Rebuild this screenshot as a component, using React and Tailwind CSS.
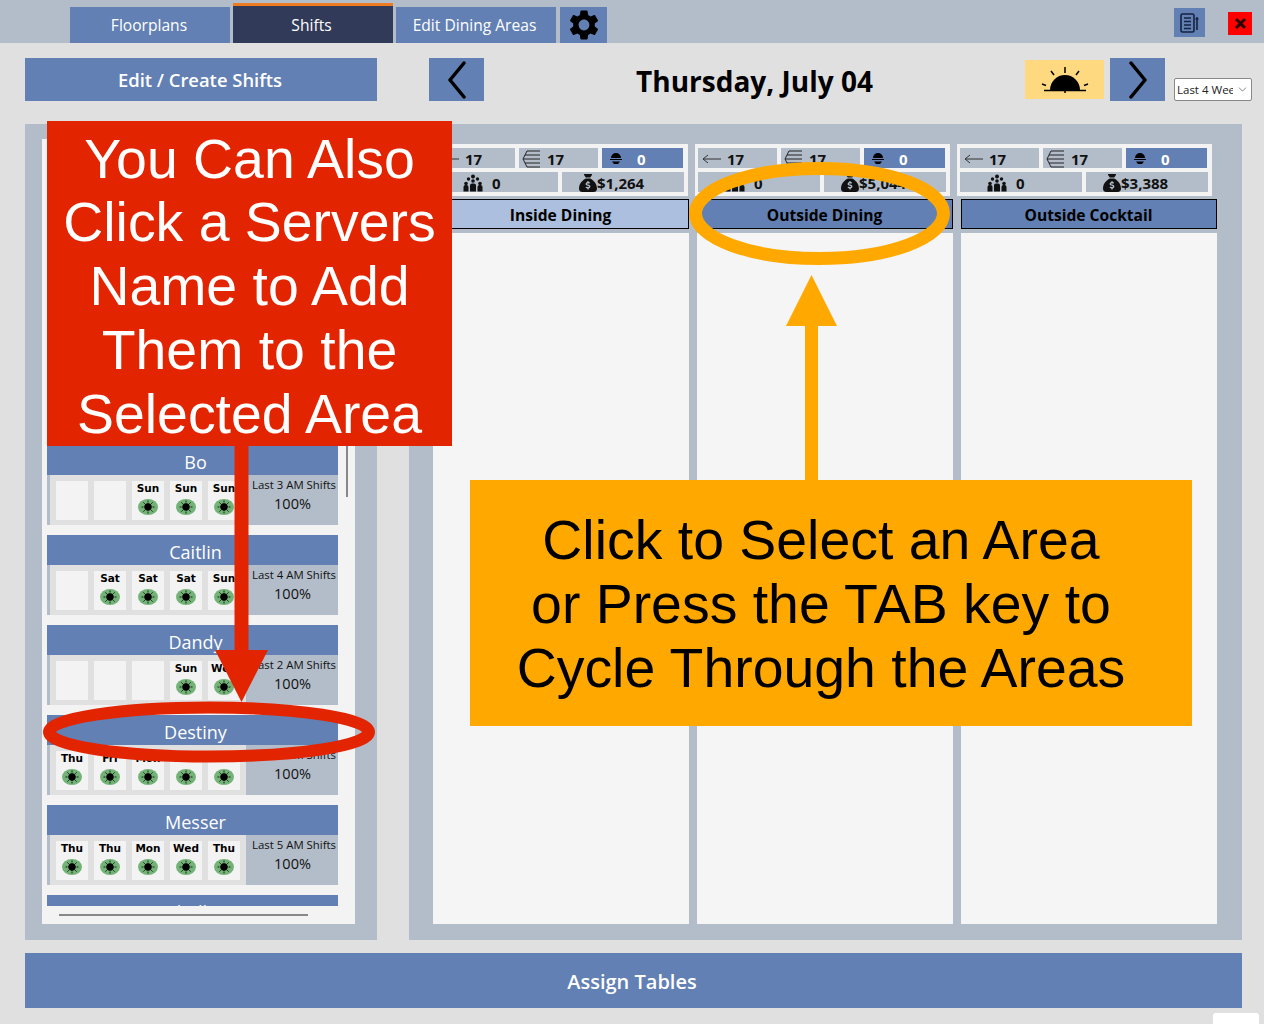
import { ChevronDown } from 'lucide-react'
import { MdSettings } from 'react-icons/md'
import { FaSackDollar } from 'react-icons/fa6'

const ui = "font-['Open_Sans','Noto_Sans',sans-serif]"

const servers = [
  { name: 'Bo', days: ['', '', 'Sun', 'Sun', 'Sun'], label: 'Last 3 AM Shifts' },
  { name: 'Caitlin', days: ['', 'Sat', 'Sat', 'Sat', 'Sun'], label: 'Last 4 AM Shifts' },
  { name: 'Dandy', days: ['', '', '', 'Sun', 'Wed'], label: 'Last 2 AM Shifts' },
  { name: 'Destiny', days: ['Thu', 'Fri', 'Mon', 'Wed', 'Thu'], label: 'Last 5 AM Shifts' },
  { name: 'Messer', days: ['Thu', 'Thu', 'Mon', 'Wed', 'Thu'], label: 'Last 5 AM Shifts' },
  { name: 'Isabella M', days: ['Thu', 'Thu', 'Mon', 'Wed', 'Thu'], label: 'Last 5 AM Shifts' },
]

const areas = [
  { name: 'Inside Dining', total: '$1,264', selected: true },
  { name: 'Outside Dining', total: '$5,044' },
  { name: 'Outside Cocktail', total: '$3,388' },
]

function Sun() {
  return (
    <span className="mt-[4px] flex h-4 w-5 items-center justify-center rounded-[50%] bg-[#74b377]">
      <svg width="14" height="14" viewBox="0 0 14 14" stroke="#000" strokeWidth="0.800">
        <circle cx="7" cy="7" r="3.400" fill="#000" />
        <path d="M7 0.500v2M7 11.500v2M0.500 7h2M11.500 7h2M2.400 2.400l1.400 1.400M10.200 10.200l1.400 1.400M2.400 11.600l1.400-1.400M10.200 3.800l1.400-1.400" />
      </svg>
    </span>
  )
}

function DayCell({ day }) {
  return (
    <div className="flex h-[39px] w-8 flex-col items-center bg-[#f3f3f3]">
      {day && (
        <>
          <span className="font-['DejaVu_Sans',sans-serif] text-[10.500px] leading-[14px] font-semibold text-black">{day}</span>
          <Sun />
        </>
      )}
    </div>
  )
}

function ServerCard({ server }) {
  return (
    <div className="mb-[10px] w-[291px] shrink-0">
      <div className="flex h-[30px] items-center justify-center bg-[#6280b3] pt-[4px] pl-[6px] text-[18px] text-white">{server.name}</div>
      <div className="flex h-[50px] border-l-[3px] border-[#b3bdc9]">
        <div className="flex w-[196px] items-center gap-[6px] bg-[#e0e0e0] pl-[6px]">
          {server.days.map((d, i) => (
            <DayCell key={i} day={d} />
          ))}
        </div>
        <div className="flex flex-1 flex-col items-center bg-[#b3bdc9] pt-[2px] pl-[4px] text-[#111]">
          <span className="text-[11.400px] leading-[16px] whitespace-nowrap">{server.label}</span>
          <span className="pr-[3px] text-[14.500px] leading-[21px]">100%</span>
        </div>
      </div>
    </div>
  )
}

function BackArrow() {
  return (
    <svg width="20" height="16" viewBox="0 0 20 16" fill="none" stroke="#333" strokeWidth="1">
      <path d="M6 4L1 8h18M1 8l5 4" />
    </svg>
  )
}

function StackArrows() {
  return (
    <svg width="20" height="18" viewBox="0 0 20 18" fill="none" stroke="#222" strokeWidth="1">
      <path d="M6 1H19M4 5H19M2 9H19M4 13H19M6 17H19M6 1L2 9L6 17" />
    </svg>
  )
}

function Dome() {
  return (
    <svg width="14" height="14" viewBox="0 0 14 14" fill="#000">
      <path d="M2 6a5 5 0 0 1 10 0z" />
      <path d="M1 7h12v1H1z" />
      <path d="M3 9.500h8l-2 2.500H5z" />
    </svg>
  )
}

function People() {
  return (
    <svg width="20" height="18" viewBox="0 0 20 18" fill="#111">
      <circle cx="10" cy="2.500" r="2" />
      <circle cx="5.500" cy="5" r="1.700" />
      <circle cx="14.500" cy="5" r="1.700" />
      <circle cx="10" cy="7" r="1.800" />
      <circle cx="3" cy="9.500" r="1.800" />
      <circle cx="17" cy="9.500" r="1.800" />
      <path d="M0.500 17.500v-4.500a2 2 0 0 1 2-2h1a2 2 0 0 1 2 2v4.500zM7 17.500v-6a2 2 0 0 1 2-2h2a2 2 0 0 1 2 2v6zM14.500 17.500v-4.500a2 2 0 0 1 2-2h1a2 2 0 0 1 2 2v4.500z" />
    </svg>
  )
}

function AreaStats({ total }) {
  return (
    <div className="flex h-[52px] w-[255px] flex-col gap-1 bg-[#f3f3f3] px-[3px] py-1 text-[15px] leading-[20px] font-bold text-[#111]">
      <div className="flex h-5 gap-1">
        <div className="flex w-[79px] items-center gap-[5px] bg-[#b3bdc9] pt-[2px] pl-[4px]">
          <BackArrow /> 17
        </div>
        <div className="flex w-[79px] items-center gap-[6px] bg-[#b3bdc9] pt-[2px] pl-[2px]">
          <StackArrows /> 17
        </div>
        <div className="flex w-[81px] items-center bg-[#6280b3] pt-[2px] pl-[7px] text-white">
          <Dome />
          <span className="ml-[14px]">0</span>
        </div>
      </div>
      <div className="flex h-5 gap-1">
        <div className="flex w-[122px] items-center gap-[9px] bg-[#b3bdc9] pt-[1px] pl-[27px]">
          <People /> 0
        </div>
        <div className="flex w-[122px] items-center bg-[#b3bdc9] pt-[1px] pl-[17px]">
          <FaSackDollar size={18} color="#111" /> {total}
        </div>
      </div>
    </div>
  )
}

function NavButton({ dir }) {
  return (
    <div className="flex h-[43px] w-[55px] items-center justify-center bg-[#6280b3]">
      <svg width="26" height="38" viewBox="0 0 26 38" fill="none" stroke="#000" strokeWidth="3.500" strokeLinecap="round" strokeLinejoin="round">
        {dir === 'left' ? <path d="M20 2L6 19l14 17" /> : <path d="M6 2l14 17L6 36" />}
      </svg>
    </div>
  )
}

export default function App() {
  return (
    <div className={`${ui} relative h-[1024px] w-[1264px] overflow-hidden bg-[#e0e0e0]`}>
      {/* top bar */}
      <div className="flex h-[43px] items-end bg-[#b3bdc9] pl-[70px]">
        <div className="flex h-9 w-40 items-center justify-center bg-[#6280b3] pt-[2px] pr-[2px] text-[15.600px] text-white">Floorplans</div>
        <div className="ml-[3px] flex h-10 w-40 items-center justify-center border-t-[3px] border-[#ee7b22] bg-[#313a58] pt-[2px] pr-[3px] text-[15.600px] text-white">Shifts</div>
        <div className="ml-[3px] flex h-9 w-40 items-center justify-center bg-[#6280b3] pt-[2px] pr-[3px] text-[15.600px] text-white">Edit Dining Areas</div>
        <div className="ml-1 flex h-9 w-[47px] items-center justify-center bg-[#6280b3]">
          <MdSettings size={36} color="#000" />
        </div>
        <div className="mb-[6px] ml-[567px] flex h-[29px] w-[31px] items-center justify-center bg-[#6280b3]">
          <svg width="22" height="22" viewBox="0 0 22 22" fill="none" stroke="#16223f" strokeWidth="1.600">
            <rect x="2" y="2" width="13" height="18" rx="1.500" />
            <path d="M5 6h7M5 9.500h7M5 13h7M5 16.500h7M18 5v13M16.500 7h3" />
          </svg>
        </div>
        <div className="mb-2 ml-[23px] flex h-[23px] w-6 items-center justify-center bg-[#ff0000]">
          <svg width="13" height="13" viewBox="0 0 13 13" stroke="#2a0000" strokeWidth="3">
            <path d="M2 2l9 9M11 2l-9 9" />
          </svg>
        </div>
      </div>

      {/* date row */}
      <div className="relative flex h-[81px] pt-[15px] pl-[25px]">
        <div className="flex h-[43px] w-[352px] items-center justify-center bg-[#6280b3] pr-[2px] text-[18.400px] font-semibold text-white">Edit / Create Shifts</div>
        <div className="ml-[52px]">
          <NavButton dir="left" />
        </div>
        <div className="flex h-[43px] w-[541px] items-center justify-center pt-[2px] text-[28px] font-bold text-black">Thursday, July 04</div>
        <div className="mt-[2px] flex h-[39px] w-[79px] bg-[#ffd97f]">
          <svg width="79" height="39" viewBox="0 0 79 39" fill="none" stroke="#000" strokeWidth="1.500">
            <path d="M25 30a15 15 0 0 1 30 0z" fill="#000" stroke="none" />
            <path d="M19 30.500h42M40 7v6M26 11l3 4M54 11l-3 4M17 24l4 1.500M63 24l-4 1.500M40 31v2" />
          </svg>
        </div>
        <div className="ml-[6px]">
          <NavButton dir="right" />
        </div>
        <div className="mt-[20px] ml-[9px] flex h-[23px] w-[78px] items-center overflow-hidden rounded-[2px] border border-[#888] bg-white pl-[2px] text-[11.500px] whitespace-nowrap text-[#222]">
          <span className="w-[56px] overflow-hidden">Last 4 Weeks</span>
          <ChevronDown size={13} strokeWidth={1} className="ml-[3px]" />
        </div>
      </div>

      {/* panels */}
      <div className="flex h-[816px] gap-8 pl-[25px]">
        <div className="h-full w-[352px] bg-[#b3bdc9] pt-[15px] pl-[17px]">
          <div className="relative h-[785px] w-[313px] bg-[#f3f3f3] pl-[5px]">
            <div className="flex h-[767px] flex-col overflow-hidden pt-[306px]">
              {servers.map((s) => (
                <ServerCard key={s.name} server={s} />
              ))}
            </div>
            {/* scrollbars */}
            <div className="absolute top-[307px] left-[304px] h-[51px] w-[2px] bg-[#888]" />
            <div className="absolute top-[775px] left-[17px] h-[2px] w-[249px] bg-[#888]" />
          </div>
        </div>

        <div className="h-full w-[833px] bg-[#b3bdc9] pt-5 pl-6">
          <div className="flex gap-[7px]">
            {areas.map((a) => (
              <AreaStats key={a.name} total={a.total} />
            ))}
          </div>
          <div className="mt-[3px] flex gap-2">
            {areas.map((a) => (
              <div
                key={a.name}
                className={`flex h-[30px] w-[256px] items-center justify-center border border-black pt-[3px] pr-[1px] text-[15.600px] font-bold text-black ${a.selected ? 'bg-[#adbfde]' : 'bg-[#6280b3]'}`}
              >
                {a.name}
              </div>
            ))}
          </div>
          <div className="mt-1 flex gap-2">
            {areas.map((a) => (
              <div key={a.name} className="h-[691px] w-[256px] bg-[#f5f5f5]" />
            ))}
          </div>
        </div>
      </div>

      {/* bottom button */}
      <div className="mt-[13px] ml-[25px] flex h-[55px] w-[1217px] items-center justify-center bg-[#6280b3] pt-[2px] pr-[3px] text-[20px] font-semibold text-white">Assign Tables</div>
      <div className="absolute top-[1013px] left-[1213px] h-5 w-[46px] rounded-[3px] bg-white" />

      {/* tutorial overlays */}
      <div className="absolute top-[121px] left-[47px] flex h-[325px] w-[405px] items-center justify-center bg-[#e32400] pt-[7px] text-center font-['Liberation_Sans',sans-serif] text-[55.400px] leading-[63.800px] text-white">
        <div>
          You Can Also
          <br />
          Click a Servers
          <br />
          Name to Add
          <br />
          Them to the
          <br />
          Selected Area
        </div>
      </div>
      <div className="absolute top-[480px] left-[470px] flex h-[246px] w-[722px] items-center justify-center bg-[#ffa800] pt-[2px] pr-[20px] text-center font-['Liberation_Sans',sans-serif] text-[55.400px] leading-[64px] text-black">
        <div>
          Click to Select an Area
          <br />
          or Press the TAB key to
          <br />
          Cycle Through the Areas
        </div>
      </div>
      <svg className="pointer-events-none absolute top-0 left-0" width="1264" height="1024" fill="none">
        <path d="M241.500 446V655" stroke="#e32400" strokeWidth="14" />
        <path d="M215 650h53l-26.500 52z" fill="#e32400" />
        <ellipse cx="209" cy="732" rx="160" ry="24.500" stroke="#e32400" strokeWidth="12" />
        <ellipse cx="819.500" cy="213.500" rx="124" ry="45" stroke="#ffa800" strokeWidth="13" />
        <path d="M811.500 480V320" stroke="#ffa800" strokeWidth="13" />
        <path d="M786 326h51l-25.500-51z" fill="#ffa800" />
      </svg>
    </div>
  )
}
